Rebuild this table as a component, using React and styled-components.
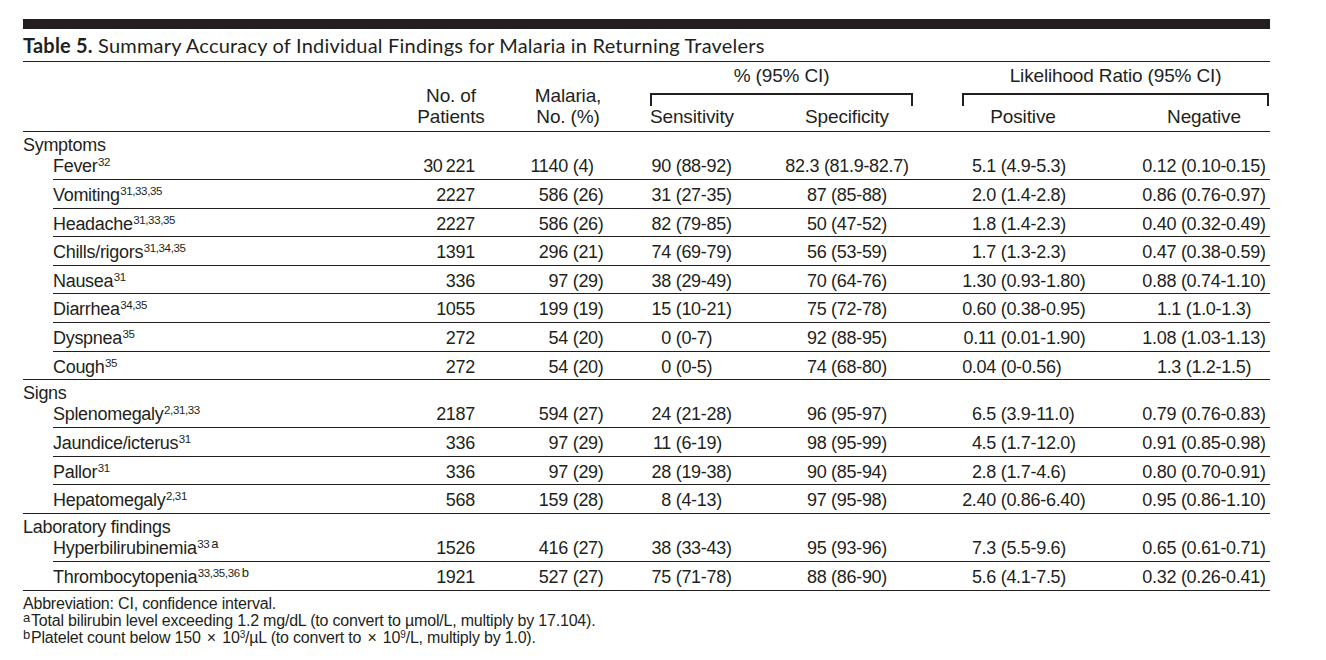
import React from 'react';
import styled, { createGlobalStyle } from 'styled-components';

const INK = '#231f20';

const GlobalStyle = createGlobalStyle`
  html, body { margin: 0; padding: 0; background: #ffffff; }
  body {
    color: ${INK};
    font-family: "Liberation Sans", Arial, Helvetica, sans-serif;
  }
`;

const COLS = '393px 70px 164px 82px 230px 122px 186px';
const ITEM_COLS = '363px 70px 164px 82px 230px 122px 186px';

const Page = styled.div`
  width: 1247px;
  padding: 19px 0 0 23px;
`;

const TopBar = styled.div`
  height: 10px;
  background: ${INK};
`;

const Title = styled.h1`
  margin: 0;
  padding: 4px 0 4px;
  font-family: Lato, "Open Sans", sans-serif;
  font-weight: 400;
  font-size: 20px;
  line-height: 24px;
  letter-spacing: 0.2px;
  border-bottom: 1px solid ${INK};
  white-space: nowrap;
`;

const TitleLabel = styled.span`
  font-weight: 700;
`;

const HeadGrid = styled.div`
  display: grid;
  grid-template-columns: ${COLS};
  grid-template-rows: auto auto;
  border-bottom: 1px solid ${INK};
  font-size: 19px;
  letter-spacing: -0.15px;
`;

const StackHead = styled.div`
  grid-column: ${p => p.$col};
  grid-row: 1 / span 2;
  align-self: end;
  text-align: center;
  line-height: 21px;
  padding-bottom: 4px;
  white-space: nowrap;
`;

const Group = styled.div`
  grid-column: ${p => p.$col} / span 2;
  grid-row: 1;
  padding-top: 4px;
  margin-right: ${p => p.$mr}px;
  display: flex;
  flex-direction: column;
`;

const GroupLabel = styled.div`
  text-align: center;
  line-height: 20px;
  white-space: nowrap;
`;

const Bracket = styled.div`
  margin-top: 7px;
  height: 11px;
  border: 2px solid ${INK};
  border-bottom: none;
`;

const SubHead = styled.div`
  grid-column: ${p => p.$col};
  grid-row: 2;
  text-align: center;
  line-height: 20px;
  padding: 1px ${p => p.$pr || 0}px 4px ${p => p.$pl || 0}px;
  white-space: nowrap;
`;

const Body = styled.div`
  border-bottom: 1px solid ${INK};
  font-size: 18px;
  letter-spacing: -0.3px;
`;

const Section = styled.div`
  border-top: ${p => (p.$first ? 'none' : `1px solid ${INK}`)};
`;

const Category = styled.div`
  padding-top: 3px;
  line-height: 20px;
`;

const ItemRow = styled.div`
  display: grid;
  grid-template-columns: ${ITEM_COLS};
  margin-left: 30px;
  border-top: ${p => (p.$first ? 'none' : `1px solid ${INK}`)};
  padding-top: ${p => (p.$first ? 0 : 3)}px;
  padding-bottom: ${p => (p.$first ? 2 : 0)}px;
  line-height: ${p => (p.$first ? '22px' : '24.6px')};
`;

const Cell = styled.div`
  text-align: ${p => p.$align || 'left'};
  padding-left: ${p => p.$pl || 0}px;
  padding-right: ${p => p.$pr || 0}px;
  white-space: nowrap;
`;

const Lead = styled.span`
  display: inline-block;
  width: ${p => p.$w}px;
  text-align: right;
`;

const Ref = styled.sup`
  font-size: 11.5px;
  line-height: 0;
  vertical-align: 6px;
  letter-spacing: -0.35px;
  margin-left: 0.5px;
`;

const RefLetter = styled.span`
  font-size: 13px;
  letter-spacing: 0;
  margin-left: 2px;
`;

const Notes = styled.div`
  padding-top: 4.5px;
  font-size: 16px;
  line-height: 17px;
  letter-spacing: -0.2px;
`;

const NoteLine = styled.div`
  white-space: nowrap;
`;

const NoteMark = styled.span`
  font-size: 13px;
  vertical-align: 4px;
  line-height: 0;
  margin-right: 1px;
`;

const Pow = styled.sup`
  font-size: 10px;
  line-height: 0;
  vertical-align: 5px;
`;

const Times = styled.span`
  padding: 0 2px;
`;

const DATA_COLS = [
  { align: 'right', pr: 11 },
  { split: 42, pl: 40 },
  { split: 20, pl: 1 },
  { align: 'center' },
  { split: 34, pl: 0 },
  { align: 'center', pl: 56, pr: 2 },
];

const SECTIONS = [
  {
    name: 'Symptoms',
    rows: [
      ['Fever', '32', '', '30\u2009221', '1140 (4)', '90 (88-92)', '82.3 (81.9-82.7)', '5.1 (4.9-5.3)', '0.12 (0.10-0.15)'],
      ['Vomiting', '31,33,35', '', '2227', '586 (26)', '31 (27-35)', '87 (85-88)', '2.0 (1.4-2.8)', '0.86 (0.76-0.97)'],
      ['Headache', '31,33,35', '', '2227', '586 (26)', '82 (79-85)', '50 (47-52)', '1.8 (1.4-2.3)', '0.40 (0.32-0.49)'],
      ['Chills/rigors', '31,34,35', '', '1391', '296 (21)', '74 (69-79)', '56 (53-59)', '1.7 (1.3-2.3)', '0.47 (0.38-0.59)'],
      ['Nausea', '31', '', '336', '97 (29)', '38 (29-49)', '70 (64-76)', '1.30 (0.93-1.80)', '0.88 (0.74-1.10)'],
      ['Diarrhea', '34,35', '', '1055', '199 (19)', '15 (10-21)', '75 (72-78)', '0.60 (0.38-0.95)', '1.1 (1.0-1.3)'],
      ['Dyspnea', '35', '', '272', '54 (20)', '0 (0-7)', '92 (88-95)', '0.11 (0.01-1.90)', '1.08 (1.03-1.13)'],
      ['Cough', '35', '', '272', '54 (20)', '0 (0-5)', '74 (68-80)', '0.04 (0-0.56)', '1.3 (1.2-1.5)'],
    ],
  },
  {
    name: 'Signs',
    rows: [
      ['Splenomegaly', '2,31,33', '', '2187', '594 (27)', '24 (21-28)', '96 (95-97)', '6.5 (3.9-11.0)', '0.79 (0.76-0.83)'],
      ['Jaundice/icterus', '31', '', '336', '97 (29)', '11 (6-19)', '98 (95-99)', '4.5 (1.7-12.0)', '0.91 (0.85-0.98)'],
      ['Pallor', '31', '', '336', '97 (29)', '28 (19-38)', '90 (85-94)', '2.8 (1.7-4.6)', '0.80 (0.70-0.91)'],
      ['Hepatomegaly', '2,31', '', '568', '159 (28)', '8 (4-13)', '97 (95-98)', '2.40 (0.86-6.40)', '0.95 (0.86-1.10)'],
    ],
  },
  {
    name: 'Laboratory findings',
    rows: [
      ['Hyperbilirubinemia', '33', 'a', '1526', '416 (27)', '38 (33-43)', '95 (93-96)', '7.3 (5.5-9.6)', '0.65 (0.61-0.71)'],
      ['Thrombocytopenia', '33,35,36', 'b', '1921', '527 (27)', '75 (71-78)', '88 (86-90)', '5.6 (4.1-7.5)', '0.32 (0.26-0.41)'],
    ],
  },
];

function Value({ spec, text }) {
  if (spec.split) {
    const i = text.indexOf(' ');
    return (
      <Cell $pl={spec.pl} $pr={spec.pr}>
        <Lead $w={spec.split}>{text.slice(0, i)}</Lead>
        {text.slice(i)}
      </Cell>
    );
  }
  return (
    <Cell $align={spec.align} $pl={spec.pl} $pr={spec.pr}>
      {text}
    </Cell>
  );
}

function Item({ row, first }) {
  const [label, refs, letter, ...values] = row;
  return (
    <ItemRow $first={first}>
      <Cell>
        {label}
        <Ref>
          {refs}
          {letter && <RefLetter>{letter}</RefLetter>}
        </Ref>
      </Cell>
      {values.map((v, i) => (
        <Value key={i} spec={DATA_COLS[i]} text={v} />
      ))}
    </ItemRow>
  );
}

export default function App() {
  return (
    <>
      <GlobalStyle />
      <Page>
        <TopBar />
        <Title>
          <TitleLabel>Table 5.</TitleLabel> Summary Accuracy of Individual Findings for Malaria in Returning Travelers
        </Title>
        <HeadGrid>
          <StackHead $col={2}>
            No. of
            <br />
            Patients
          </StackHead>
          <StackHead $col={3}>
            Malaria,
            <br />
            No. (%)
          </StackHead>
          <Group $col={4} $mr={49}>
            <GroupLabel>% (95% CI)</GroupLabel>
            <Bracket />
          </Group>
          <Group $col={6} $mr={1}>
            <GroupLabel>Likelihood Ratio (95% CI)</GroupLabel>
            <Bracket />
          </Group>
          <SubHead $col={4}>Sensitivity</SubHead>
          <SubHead $col={5}>Specificity</SubHead>
          <SubHead $col={6}>Positive</SubHead>
          <SubHead $col={7} $pl={56} $pr={2}>
            Negative
          </SubHead>
        </HeadGrid>
        <Body>
          {SECTIONS.map((s, si) => (
            <Section key={s.name} $first={si === 0}>
              <Category>{s.name}</Category>
              {s.rows.map((r, ri) => (
                <Item key={r[0]} row={r} first={ri === 0} />
              ))}
            </Section>
          ))}
        </Body>
        <Notes>
          <NoteLine>Abbreviation: CI, confidence interval.</NoteLine>
          <NoteLine>
            <NoteMark>a</NoteMark>Total bilirubin level exceeding 1.2 mg/dL (to convert to µmol/L, multiply by 17.104).
          </NoteLine>
          <NoteLine>
            <NoteMark>b</NoteMark>Platelet count below 150 <Times>×</Times> 10<Pow>3</Pow>/µL (to convert to <Times>×</Times> 10<Pow>9</Pow>/L, multiply by 1.0).
          </NoteLine>
        </Notes>
      </Page>
    </>
  );
}
